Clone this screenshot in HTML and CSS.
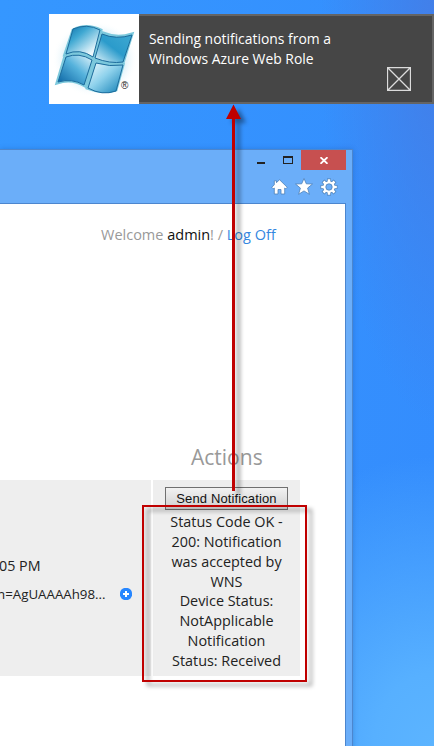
FILE: index.html
```html
<!DOCTYPE html>
<html lang="en">
<head>
<meta charset="utf-8">
<title>Send Notification</title>
<link rel="stylesheet" href="styles.css">
</head>
<body>
<div class="desktop">
  <section class="toast">
    <div class="toast-logo">
      <svg width="90" height="90" viewBox="0 0 90 90">
        <defs>
          <radialGradient id="halo"><stop offset=".5" stop-color="#a5daf0"/><stop offset="1" stop-color="#fff" stop-opacity="0"/></radialGradient>
          <linearGradient id="p1" x1="0" y1="0" x2=".9" y2="1"><stop offset="0" stop-color="#0b6ea8"/><stop offset=".35" stop-color="#3fa8d2"/><stop offset=".85" stop-color="#edf8fd"/></linearGradient>
          <linearGradient id="p2" x1="1" y1="0" x2="0" y2="1"><stop offset="0" stop-color="#3fa9d2"/><stop offset=".5" stop-color="#2b9bcb"/><stop offset="1" stop-color="#e4f6fc"/></linearGradient>
          <linearGradient id="p3" x1="1" y1="0" x2="0" y2="1"><stop offset="0" stop-color="#e2f5fc"/><stop offset=".45" stop-color="#55b2dc"/><stop offset="1" stop-color="#0660a0"/></linearGradient>
          <linearGradient id="p4" x1="0" y1="0" x2="1" y2="1"><stop offset="0" stop-color="#f0fafe"/><stop offset=".45" stop-color="#8fd2ec"/><stop offset="1" stop-color="#0f7eb5"/></linearGradient>
        </defs>
        <ellipse cx="46" cy="45" rx="43" ry="38" fill="url(#halo)"/>
        <path d="M24 16Q37 9 52 16L45 44Q31 34 16 40Z M54 19Q68 25 83 20L74 49Q61 51 46 45Z M16 42Q31 37 44 46L36 72Q23 64 8 69Z M46 48Q60 53 74 51L67 76Q54 80 38 74Z" fill="#7cc8dc" stroke="#7cc8dc" stroke-width="3"/>
        <g stroke="#1c6c9c" stroke-width="1">
          <path d="M24 15Q38 9 51 16L44 43Q31 34 17 40Z" fill="url(#p1)"/>
          <path d="M53 20Q67 26 83 21L74 48Q61 50 46 44Z" fill="url(#p2)"/>
          <path d="M17 43Q30 38 43 46L35 71Q23 64 9 68Z" fill="url(#p3)"/>
          <path d="M47 49Q61 53 74 51L67 77Q53 82 39 74Z" fill="url(#p4)"/>
        </g>
      </svg>
      <span class="registered">®</span>
    </div>
    <div class="toast-body">
      <p class="toast-text">Sending notifications from a<br>Windows Azure Web Role</p>
      <svg class="toast-icon" width="24" height="24" viewBox="0 0 24 24"><path d="M.5.5h23v23H.5zM.5.5l23 23M23.5.5l-23 23" fill="none" stroke="#dcdcdc" stroke-width="1.3"/></svg>
    </div>
  </section>

  <section class="window">
    <div class="titlebar">
      <svg class="minimize" width="8" height="2"><path d="M0 0h8v2H0z" fill="#222"/></svg>
      <svg class="maximize" width="10" height="8"><path d="M.5 0v8M9.5 0v8M0 7.5h10" fill="none" stroke="#222"/><path d="M0 0h10v2H0z" fill="#222"/></svg>
      <div class="close"><svg width="8" height="7" viewBox="0 0 8 7"><path d="M.5.2l7 6.6M7.500.2l-7 6.600" stroke="#fff" stroke-width="1.8"/></svg></div>
    </div>
    <div class="toolbar">
      <svg width="17" height="16" viewBox="0 0 17 16"><path d="M8.500.7L16.200 8.300 14.700 9.800l-1-.8v6H10v-4.500H7V15H3.300V9l-1 .8L.8 8.300 3.300 5.800V1.800h2.200v1.900z" fill="#fff" stroke="#4c80b8" stroke-width=".8"/></svg>
      <svg width="18" height="17" viewBox="0 0 18 17"><path d="M9 .5l2.300 5.300 6.200.2-4.900 4.100 1.800 6.200L9 12.900 3.600 16.300l1.800-6.200L.5 6l6.200-.2z" fill="#fff" stroke="#4c80b8" stroke-width=".8"/></svg>
      <svg width="18" height="18" viewBox="-9 -9 18 18"><g stroke="#4c80b8" stroke-width="4"><path d="M0-8.400V8.400M-8.400 0H8.400M-6-6l12 12M6-6l-12 12"/></g><circle r="6.400" fill="#4c80b8"/><g stroke="#fff" stroke-width="2.600"><path d="M0-7.800V7.800M-7.800 0h15.600M-5.500-5.500l11 11M5.500-5.500l-11 11"/></g><circle r="5.700" fill="#fff"/><circle r="3.200" fill="#6baef9" stroke="#4c80b8" stroke-width=".8"/></svg>
    </div>
    <main class="page">
      <p class="welcome">Welcome <b>admin</b>! / <a>Log Off</a></p>
      <h2 class="actions-title">Actions</h2>
      <div class="row">
        <div class="cell details">
          <p class="time">05 PM</p>
          <div class="uri"><span class="uri-text">n=AgUAAAAh98...</span><svg width="12" height="12"><circle cx="6" cy="6" r="6.2" fill="#2686ff"/><path d="M6 3v6M3 6h6" stroke="#fff" stroke-width="2"/></svg></div>
        </div>
        <div class="cell actions">
          <button class="send">Send Notification</button>
          <p class="status"><span>Status Code OK -</span><span>200: Notification</span><span>was accepted by</span><span>WNS</span><span>Device Status:</span><span>NotApplicable</span><span>Notification</span><span>Status: Received</span></p>
        </div>
      </div>
    </main>
  </section>
  <div class="highlight"></div>
  <svg class="arrow" width="30" height="390" viewBox="0 0 30 390"><path d="M12 387V15H6L13.500.5 21 15h-6v372z"/></svg>
</div>
</body>
</html>
```
FILE: styles.css
```css
* { box-sizing: border-box; }
body { margin: 0; }
p, h2 { margin: 0; font-weight: 400; }
.desktop {
  position: relative;
  width: 434px;
  height: 746px;
  overflow: hidden;
  padding-top: 14px;
  font: 14px/20px "Open Sans", "Noto Sans", sans-serif;
  color: #222;
  background:
    radial-gradient(ellipse 240px 290px at 434px 746px, #5cb4ff 0, #57b0ff 25%, rgba(92,180,255,0) 100%),
    radial-gradient(ellipse 130px 400px at 450px 30px, #447de6 0, rgba(65,127,232,0) 100%),
    linear-gradient(100deg, #3597ff, #348cfd);
}
.toast { display: flex; margin-left: 49px; height: 90px; }
.toast-logo { position: relative; width: 90px; background: #fff; }
.toast-logo svg { display: block; }
.registered { position: absolute; left: 72px; top: 65px; font: 10px/14px "Liberation Sans", sans-serif; }
.toast-body {
  flex: 1;
  display: flex;
  justify-content: space-between;
  padding: 13px 21px 0 10px;
  border: 2px solid #646464;
  border-left: 0;
  background: #464646;
  color: #fff;
}
.toast-text { white-space: nowrap; font-size: 13.9px; }
.toast-icon { margin-top: 38px; }
.window {
  width: 353px;
  height: 620px;
  margin-top: 45px;
  padding-right: 6px;
  border-top: 1px solid #4c86ce;
  border-right: 1px solid #4c86ce;
  background: #6baef9;
  box-shadow: 0 0 5px rgba(20,70,150,.3);
}
.titlebar { display: flex; justify-content: flex-end; height: 20px; }
.minimize { margin: 12px 18px 0 0; }
.maximize { margin: 6px 8px 0 0; }
.close { display: flex; align-items: center; justify-content: center; width: 45px; background: #c75050; }
.toolbar { display: flex; justify-content: flex-end; align-items: center; gap: 7px; height: 33px; padding-right: 8px; }
.page { height: 560px; border-top: 1px solid #4c86ce; border-right: 1px solid #4c86ce; background: #fff; }
.welcome { padding: 21px 0 0 101px; font-size: 14.5px; color: #999; white-space: nowrap; }
.welcome b { font-weight: 400; color: #111; }
.welcome a { color: #3487df; }
.actions-title { height: 30px; margin: 197px 0 0 191px; font-size: 21px; line-height: 30px; color: #999; }
.row { display: flex; gap: 2px; height: 196px; margin-top: 8px; }
.cell { background: #eee; }
.details { width: 151px; padding-top: 76px; }
.time { margin-left: -1px; font-size: 14.3px; white-space: nowrap; }
.uri { display: flex; align-items: center; justify-content: space-between; margin: 8px 19px 0 -3px; font-size: 13.3px; white-space: nowrap; }
.actions { width: 147px; padding-top: 7px; text-align: center; }
.send { display: block; width: 123px; height: 23px; margin: 0 auto; padding: 0; border: 1px solid #707070; background: linear-gradient(#f2f2f2, #d0d0d0); color: #111; font: 13px/20px "Liberation Sans", sans-serif; letter-spacing: .12px; }
.status { margin-top: 2px; font-size: 14.4px; line-height: 19.85px; }
.status span { display: block; white-space: nowrap; }
.highlight { position: absolute; left: 142px; top: 505px; width: 165px; height: 177px; border: 2px solid #c00000; filter: drop-shadow(5px 4px 2px rgba(0,0,0,.4)); }
.arrow { position: absolute; left: 220px; top: 104px; overflow: visible; filter: drop-shadow(5px 4px 2px rgba(0,0,0,.4)); }
.arrow path { fill: #c00000; }
```
